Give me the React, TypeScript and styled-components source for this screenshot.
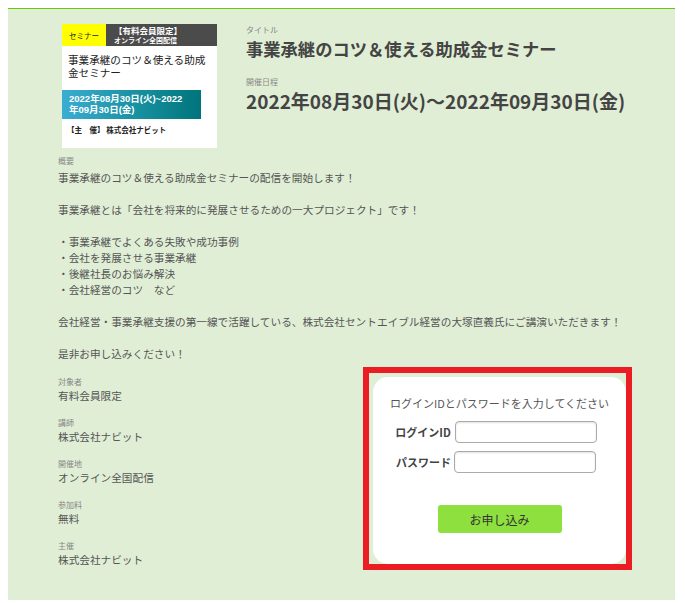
import React from "react";
import styled, { createGlobalStyle } from "styled-components";

const Global = createGlobalStyle`
  body {
    margin: 8px;
    background: #ffffff;
    font-family: "Noto Sans CJK JP", "Noto Sans", sans-serif;
  }
  * { box-sizing: border-box; }
`;

const Panel = styled.div`
  width: 667px;
  height: 592px;
  background: #e0eed5;
  border-top: 1px solid #66cc00;
  padding: 15px 30px 0 50px;
  color: #555;
`;

const Header = styled.div`
  display: flex;
  align-items: flex-start;
  gap: 29px;
`;

const Thumb = styled.div`
  width: 155px;
  height: 124px;
  margin-left: 4px;
  background: #ffffff;
  display: flex;
  flex-direction: column;
`;

const ThumbBand = styled.div`
  display: flex;
  height: 22px;
`;

const Tag = styled.div`
  width: 44px;
  background: #ffff00;
  color: #222;
  font-size: 7.5px;
  display: flex;
  align-items: center;
  justify-content: center;
`;

const Limited = styled.div`
  flex: 1;
  background: #4b4b4b;
  color: #ffffff;
  font-weight: 700;
  padding-left: 8px;
  display: flex;
  flex-direction: column;
  justify-content: center;
`;

const LimitedLine = styled.div<{ $size: number }>`
  font-size: ${(p) => p.$size}px;
  line-height: 10px;
  white-space: nowrap;
`;

const ThumbTitle = styled.div`
  font-size: 10.6px;
  line-height: 13px;
  color: #222;
  padding: 7px 4px 0 6px;
  height: 44px;
`;

const DateBox = styled.div`
  width: 139px;
  height: 29px;
  background: linear-gradient(90deg, #3badd2 0%, #17909f 55%, #00747b 100%);
  color: #ffffff;
  font-family: "Liberation Sans", "Noto Sans CJK JP", sans-serif;
  font-weight: 700;
  font-size: 9.5px;
  padding: 3px 0 0 7px;
  white-space: nowrap;
`;

const DateLine = styled.div`
  line-height: 11px;
`;

const Host = styled.div`
  font-size: 7.5px;
  font-weight: 700;
  color: #222;
  padding: 5px 0 0 5px;
  white-space: nowrap;
`;

const HeadText = styled.div`
  display: flex;
  flex-direction: column;
  padding-top: 1px;
`;

const SmallLabel = styled.div`
  font-size: 8px;
  line-height: 10px;
  color: #888;
`;

const Title = styled.div`
  font-size: 17.3px;
  line-height: 22px;
  font-weight: 700;
  color: #444;
  margin-top: 3px;
`;

const DateLabel = styled(SmallLabel)`
  margin-top: 17px;
`;

const DateText = styled.div`
  font-size: 19px;
  line-height: 24px;
  font-weight: 700;
  color: #444;
  margin-top: 2px;
  white-space: nowrap;
`;

const Overview = styled.div`
  margin-top: 8px;
`;

const Body = styled.div`
  font-size: 10.65px;
  line-height: 16px;
  color: #555;
  margin-top: 4px;
  white-space: pre;
`;

const Lower = styled.div`
  display: grid;
  grid-template-columns: 305px 269px;
  align-items: start;
`;

const Specs = styled.dl`
  margin: 0;
  padding-top: 15px;
`;

const SpecItem = styled.div`
  margin-bottom: 14px;
`;

const SpecLabel = styled.dt`
  font-size: 8px;
  line-height: 10px;
  color: #888;
`;

const SpecValue = styled.dd`
  margin: 1px 0 0 0;
  font-size: 10.65px;
  line-height: 16px;
  color: #555;
`;

const Highlight = styled.div`
  margin-top: 5px;
  width: 269px;
  height: 203px;
  border: 6px solid #ec1c24;
  padding: 4px 0 0 4px;
`;

const LoginCard = styled.div`
  height: 100%;
  background: #ffffff;
  border-radius: 15px;
  display: flex;
  flex-direction: column;
  align-items: center;
  padding-top: 18px;
`;

const Hint = styled.div`
  font-size: 11px;
  line-height: 16px;
  color: #555;
  white-space: nowrap;
`;

const FieldRow = styled.label<{ $gap: number; $mt: number }>`
  display: flex;
  align-items: center;
  gap: ${(p) => p.$gap}px;
  margin-top: ${(p) => p.$mt}px;
  padding-right: 7px;
`;

const FieldLabel = styled.span`
  font-size: 11px;
  font-weight: 700;
  color: #444;
  white-space: nowrap;
`;

const Input = styled.input`
  width: 142px;
  height: 22px;
  border: 1px solid #aaa;
  border-radius: 4px;
  background: #fff;
  box-shadow: inset 0 1px 2px rgba(0, 0, 0, 0.12);
  padding: 0 4px;
  font-size: 12px;
  outline: none;
`;

const Submit = styled.button`
  margin-top: 32px;
  width: 124px;
  height: 28px;
  border: none;
  border-radius: 3px;
  background: #8de03e;
  color: #333;
  font-family: inherit;
  font-size: 12px;
  cursor: pointer;
`;

const specs = [
  ["対象者", "有料会員限定"],
  ["講師", "株式会社ナビット"],
  ["開催地", "オンライン全国配信"],
  ["参加料", "無料"],
  ["主催", "株式会社ナビット"],
];

const overview = `事業承継のコツ＆使える助成金セミナーの配信を開始します！

事業承継とは「会社を将来的に発展させるための一大プロジェクト」です！

・事業承継でよくある失敗や成功事例
・会社を発展させる事業承継
・後継社長のお悩み解決
・会社経営のコツ　など

会社経営・事業承継支援の第一線で活躍している、株式会社セントエイブル経営の大塚直義氏にご講演いただきます！

是非お申し込みください！`;

export default function App() {
  return (
    <>
      <Global />
      <Panel>
        <Header>
          <Thumb>
            <ThumbBand>
              <Tag>セミナー</Tag>
              <Limited>
                <LimitedLine $size={8.5}>【有料会員限定】</LimitedLine>
                <LimitedLine $size={7}>オンライン全国配信</LimitedLine>
              </Limited>
            </ThumbBand>
            <ThumbTitle>事業承継のコツ＆使える助成金セミナー</ThumbTitle>
            <DateBox>
              <DateLine>2022年08月30日(火)~2022</DateLine>
              <DateLine>年09月30日(金)</DateLine>
            </DateBox>
            <Host>【主　催】 株式会社ナビット</Host>
          </Thumb>
          <HeadText>
            <SmallLabel>タイトル</SmallLabel>
            <Title>事業承継のコツ＆使える助成金セミナー</Title>
            <DateLabel>開催日程</DateLabel>
            <DateText>2022年08月30日(火)～2022年09月30日(金)</DateText>
          </HeadText>
        </Header>
        <Overview>
          <SmallLabel>概要</SmallLabel>
          <Body>{overview}</Body>
        </Overview>
        <Lower>
          <Specs>
            {specs.map(([k, v]) => (
              <SpecItem key={k}>
                <SpecLabel>{k}</SpecLabel>
                <SpecValue>{v}</SpecValue>
              </SpecItem>
            ))}
          </Specs>
          <Highlight>
            <LoginCard>
              <Hint>ログインIDとパスワードを入力してください</Hint>
              <FieldRow $gap={4} $mt={10}>
                <FieldLabel>ログインID</FieldLabel>
                <Input type="text" />
              </FieldRow>
              <FieldRow $gap={3} $mt={8}>
                <FieldLabel>パスワード</FieldLabel>
                <Input type="password" />
              </FieldRow>
              <Submit type="button">お申し込み</Submit>
            </LoginCard>
          </Highlight>
        </Lower>
      </Panel>
    </>
  );
}
